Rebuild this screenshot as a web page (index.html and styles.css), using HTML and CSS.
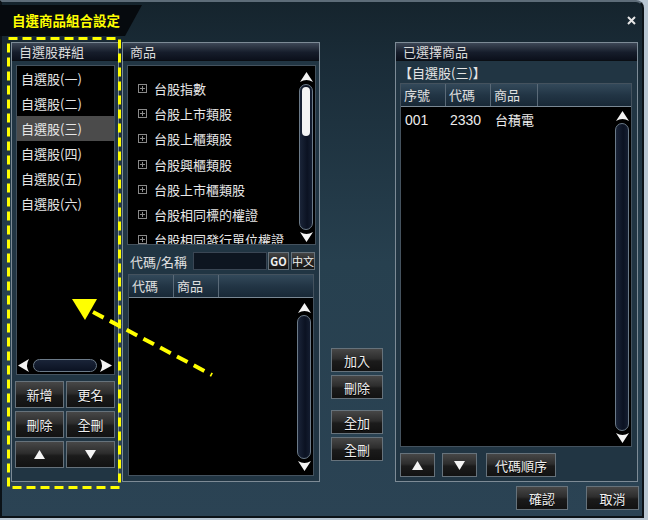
FILE: index.html
```html
<!DOCTYPE html>
<html lang="zh-Hant">
<head>
<meta charset="utf-8">
<title>自選商品組合設定</title>
<link rel="stylesheet" href="styles.css">
</head>
<body>
<div class="window">
  <div class="titlebar">
    <div class="title-tab">自選商品組合設定</div>
    <svg class="close" width="9" height="9" viewBox="0 0 9 9"><path d="M1 1 L8 8 M8 1 L1 8" stroke="#e6e6e6" stroke-width="2"/></svg>
  </div>

  <div class="main">
    <section class="panel groups">
      <div class="panel-head">自選股群組</div>
      <div class="group-list">
        <div class="group-items">
          <div class="item">自選股(一)</div>
          <div class="item">自選股(二)</div>
          <div class="item selected-item">自選股(三)</div>
          <div class="item">自選股(四)</div>
          <div class="item">自選股(五)</div>
          <div class="item">自選股(六)</div>
        </div>
        <div class="hscroll">
          <svg class="harrow" width="11" height="13" viewBox="0 0 11 13"><path d="M0 6.5 L11 0 Q7 6.5 11 13 Z" fill="#f4f4f4"/></svg>
          <div class="htrack"></div>
          <svg class="harrow right" width="12" height="13" viewBox="0 0 12 13"><path d="M12 6.5 L0 0 Q4 6.5 0 13 Z" fill="#f4f4f4"/></svg>
        </div>
      </div>
      <div class="group-buttons">
        <button class="btn">新增</button>
        <button class="btn">更名</button>
        <button class="btn">刪除</button>
        <button class="btn">全刪</button>
        <button class="btn"><svg width="11" height="9" viewBox="0 0 11 9"><path d="M5.5 0 L11 9 L0 9 Z" fill="#f4f4f4"/></svg></button>
        <button class="btn"><svg width="11" height="9" viewBox="0 0 11 9"><path d="M0 0 L11 0 L5.5 9 Z" fill="#f4f4f4"/></svg></button>
      </div>
    </section>

    <section class="panel products">
      <div class="panel-head">商品</div>
      <div class="tree-list">
        <div class="tree-items">
          <div class="tree-item"><svg class="plus" width="9" height="9" viewBox="0 0 9 9"><rect x="0.5" y="0.5" width="8" height="8" fill="none" stroke="#8a8a8a"/><path d="M4.5 2 V7 M2 4.5 H7" stroke="#8a8a8a"/></svg><span>台股指數</span></div>
          <div class="tree-item"><svg class="plus" width="9" height="9" viewBox="0 0 9 9"><rect x="0.5" y="0.5" width="8" height="8" fill="none" stroke="#8a8a8a"/><path d="M4.5 2 V7 M2 4.5 H7" stroke="#8a8a8a"/></svg><span>台股上市類股</span></div>
          <div class="tree-item"><svg class="plus" width="9" height="9" viewBox="0 0 9 9"><rect x="0.5" y="0.5" width="8" height="8" fill="none" stroke="#8a8a8a"/><path d="M4.5 2 V7 M2 4.5 H7" stroke="#8a8a8a"/></svg><span>台股上櫃類股</span></div>
          <div class="tree-item"><svg class="plus" width="9" height="9" viewBox="0 0 9 9"><rect x="0.5" y="0.5" width="8" height="8" fill="none" stroke="#8a8a8a"/><path d="M4.5 2 V7 M2 4.5 H7" stroke="#8a8a8a"/></svg><span>台股興櫃類股</span></div>
          <div class="tree-item"><svg class="plus" width="9" height="9" viewBox="0 0 9 9"><rect x="0.5" y="0.5" width="8" height="8" fill="none" stroke="#8a8a8a"/><path d="M4.5 2 V7 M2 4.5 H7" stroke="#8a8a8a"/></svg><span>台股上市櫃類股</span></div>
          <div class="tree-item"><svg class="plus" width="9" height="9" viewBox="0 0 9 9"><rect x="0.5" y="0.5" width="8" height="8" fill="none" stroke="#8a8a8a"/><path d="M4.5 2 V7 M2 4.5 H7" stroke="#8a8a8a"/></svg><span>台股相同標的權證</span></div>
          <div class="tree-item"><svg class="plus" width="9" height="9" viewBox="0 0 9 9"><rect x="0.5" y="0.5" width="8" height="8" fill="none" stroke="#8a8a8a"/><path d="M4.5 2 V7 M2 4.5 H7" stroke="#8a8a8a"/></svg><span>台股相同發行單位權證</span></div>
        </div>
        <div class="vscroll top-scroll">
          <svg class="varrow" width="13" height="10" viewBox="0 0 13 10"><path d="M6.5 0 L13 10 Q6.5 6 0 10 Z" fill="#f4f4f4"/></svg>
          <div class="track"><div class="thumb"></div></div>
          <svg class="varrow" width="13" height="10" viewBox="0 0 13 10"><path d="M6.5 10 L13 0 Q6.5 4 0 0 Z" fill="#f4f4f4"/></svg>
        </div>
      </div>
      <div class="search-row">
        <span class="search-label">代碼/名稱</span>
        <div class="search-input"></div>
        <button class="mini-btn go">GO</button>
        <button class="mini-btn zh">中文</button>
      </div>
      <div class="result-list">
        <div class="col-head">
          <div class="col w45">代碼</div>
          <div class="col w45">商品</div>
          <div class="col fill"></div>
        </div>
        <div class="list-body">
          <div class="rows"></div>
          <div class="vscroll low-scroll">
            <svg class="varrow" width="13" height="10" viewBox="0 0 13 10"><path d="M6.5 0 L13 10 Q6.5 6 0 10 Z" fill="#f4f4f4"/></svg>
            <div class="track"></div>
            <svg class="varrow" width="13" height="10" viewBox="0 0 13 10"><path d="M6.5 10 L13 0 Q6.5 4 0 0 Z" fill="#f4f4f4"/></svg>
          </div>
        </div>
      </div>
    </section>

    <div class="mid-buttons">
      <button class="btn mid">加入</button>
      <button class="btn mid">刪除</button>
      <button class="btn mid gap-top">全加</button>
      <button class="btn mid">全刪</button>
    </div>

    <section class="panel selected">
      <div class="panel-head">已選擇商品</div>
      <div class="subtitle">【自選股(三)】</div>
      <div class="sel-list">
        <div class="col-head">
          <div class="col w45">序號</div>
          <div class="col w45">代碼</div>
          <div class="col w47">商品</div>
          <div class="col fill"></div>
        </div>
        <div class="list-body">
          <div class="rows">
            <div class="row">
              <span class="cell w45 num">001</span>
              <span class="cell w45 num">2330</span>
              <span class="cell">台積電</span>
            </div>
          </div>
          <div class="vscroll sel-scroll">
            <svg class="varrow" width="13" height="10" viewBox="0 0 13 10"><path d="M6.5 0 L13 10 Q6.5 6 0 10 Z" fill="#f4f4f4"/></svg>
            <div class="track"></div>
            <svg class="varrow" width="13" height="10" viewBox="0 0 13 10"><path d="M6.5 10 L13 0 Q6.5 4 0 0 Z" fill="#f4f4f4"/></svg>
          </div>
        </div>
      </div>
      <div class="sel-buttons">
        <button class="btn sq"><svg width="11" height="9" viewBox="0 0 11 9"><path d="M5.5 0 L11 9 L0 9 Z" fill="#f4f4f4"/></svg></button>
        <button class="btn sq down"><svg width="11" height="9" viewBox="0 0 11 9"><path d="M0 0 L11 0 L5.5 9 Z" fill="#f4f4f4"/></svg></button>
        <button class="btn order">代碼順序</button>
      </div>
    </section>
  </div>

  <div class="footer">
    <button class="btn foot">確認</button>
    <button class="btn foot cancel">取消</button>
  </div>
</div>

<svg class="annot" width="648" height="520" viewBox="0 0 648 520">
  <rect x="8.5" y="38.5" width="111" height="449" fill="none" stroke="#ffff00" stroke-width="3" stroke-dasharray="9 5"/>
  <line x1="93" y1="312" x2="212" y2="375" stroke="#ffff00" stroke-width="4" stroke-dasharray="12 7"/>
  <polygon points="72,299 97,299 85,320" fill="#ffff00"/>
</svg>
</body>
</html>
```

FILE: styles.css
```css
* { box-sizing: border-box; }

body {
  margin: 0;
  position: relative;
  width: 648px;
  height: 520px;
  background: #b9c7d3;
  font-family: "Noto Sans CJK TC", "Noto Sans", sans-serif;
  color: #e4e4e4;
  overflow: hidden;
}

.window {
  width: 644px;
  height: 518px;
  border: 2px solid #0b1217;
  border-top-color: #5d6c78;
  border-radius: 0 8px 0 0;
  background: linear-gradient(#15242d 0px, #1a2c38 60px, #27404f 260px, #2b4354 518px);
  display: flex;
  flex-direction: column;
}

.titlebar {
  height: 40px;
  display: flex;
  justify-content: space-between;
  align-items: flex-start;
}

.title-tab {
  margin-top: 3px;
  margin-left: -2px;
  width: 142px;
  height: 31px;
  padding-left: 12px;
  background: #060a0e;
  clip-path: polygon(0 0, 100% 0, calc(100% - 17px) 100%, 0 100%);
  color: #ffff00;
  font-size: 13.5px;
  font-weight: bold;
  line-height: 31px;
}

.close {
  margin: 14px 6px 0 0;
}

.main {
  height: 440px;
  display: flex;
  padding-left: 9px;
}

.panel {
  border: 1px solid #7d8b96;
  background: #213543;
  display: flex;
  flex-direction: column;
}

.panel-head {
  height: 18px;
  line-height: 18px;
  padding-left: 7px;
  font-size: 13px;
  color: #dcdcdc;
  background: linear-gradient(#3d4756, #161d2b 55%, #0b101b);
  border-bottom: 1px solid #0a0e14;
  flex: none;
}

/* left group panel */
.groups { width: 108px; }

.group-list {
  margin: 4px 3px 0 4px;
  height: 310px;
  border: 1px solid #44525e;
  background: #000;
  display: flex;
  flex-direction: column;
}

.group-items { flex: 1; }

.item {
  height: 25px;
  line-height: 25px;
  padding-left: 4px;
  font-size: 13px;
  color: #e6e6e6;
}

.selected-item { background: #4b4b4b; }

.hscroll {
  height: 13px;
  margin-bottom: 2px;
  display: flex;
  align-items: center;
}

.harrow { margin-left: 1px; flex: none; }
.harrow.right { margin-left: 3px; }

.htrack {
  margin-left: 4px;
  width: 64px;
  height: 13px;
  border: 1px solid #6b7a88;
  border-radius: 7px;
  background: linear-gradient(#1a2438, #0b1222);
}

.group-buttons {
  margin: 6px 0 0 3px;
  width: 100px;
  display: grid;
  grid-template-columns: 49px 49px;
  grid-auto-rows: 27px;
  gap: 3px 2px;
}

/* buttons */
.btn {
  margin: 0;
  padding: 0;
  border: 1px solid #66727b;
  background: linear-gradient(#474747, #2d2d2d 45%, #1b1b1b 55%, #121212);
  color: #f0f0f0;
  font-family: "Noto Sans CJK TC", "Noto Sans", sans-serif;
  font-size: 13px;
  line-height: 1;
  display: flex;
  align-items: center;
  justify-content: center;
  text-shadow: 0 1px 0 #000;
}

/* middle products panel */
.products { width: 198px; margin-left: 3px; }

.tree-list {
  margin: 4px 3px 0 4px;
  height: 180px;
  border: 1px solid #44525e;
  background: #000;
  display: flex;
  overflow: hidden;
}

.tree-items {
  flex: 1;
  padding-top: 10px;
  overflow: hidden;
}

.tree-item {
  height: 25.2px;
  display: flex;
  align-items: center;
  white-space: nowrap;
  font-size: 13px;
  color: #e8e8e8;
}

.plus { margin-left: 10px; flex: none; }
.tree-item span { margin-left: 7px; }

.vscroll {
  width: 16px;
  flex: none;
  display: flex;
  flex-direction: column;
  align-items: center;
  margin-right: 1px;
}

.top-scroll { padding: 6px 0 2px; }
.low-scroll { padding: 5px 0 4px; }
.sel-scroll { padding: 4px 0 3px; }

.varrow { flex: none; }

.track {
  flex: 1;
  width: 14px;
  margin: 2px 0;
  border: 1px solid #6b7a88;
  border-radius: 7px;
  background: linear-gradient(90deg, #1a2438, #0b1222 60%, #141d30);
  padding-top: 2px;
}

.thumb {
  width: 8px;
  height: 49px;
  margin: 0 auto;
  border-radius: 4px;
  background: #f4f4f4;
}

.search-row {
  margin-top: 7px;
  height: 18px;
  display: flex;
  align-items: center;
  padding-left: 7px;
}

.search-label {
  font-size: 13px;
  color: #e0e0e0;
  width: 63px;
  white-space: nowrap;
}

.search-input {
  width: 74px;
  height: 18px;
  background: #0d1520;
  border: 1px solid #3a4654;
}

.mini-btn {
  height: 18px;
  margin: 0 0 0 1px;
  padding: 0;
  border: 1px solid #66727b;
  background: linear-gradient(#464646, #262626 50%, #141414);
  color: #f0f0f0;
  font-family: "Noto Sans CJK TC", "Noto Sans", sans-serif;
  font-size: 11px;
  font-weight: bold;
  line-height: 1;
}

.go { width: 21px; }
.zh { width: 24px; margin-left: 2px; font-weight: normal; }

.result-list {
  margin: 4px 5px 0 5px;
  height: 202px;
  border: 1px solid #44525e;
  background: #000;
  display: flex;
  flex-direction: column;
}

.col-head {
  height: 23px;
  flex: none;
  display: flex;
  background: linear-gradient(#33495a, #223545 50%, #182836);
  border-bottom: 1px solid #7a8894;
}

.col {
  height: 100%;
  border-right: 1px solid #5a6a78;
  font-size: 13px;
  line-height: 22px;
  padding-left: 3px;
  color: #e0e0e0;
}

.col.fill { flex: 1; border-right: none; }

.w45 { width: 45px; }
.w47 { width: 47px; }

.list-body {
  flex: 1;
  display: flex;
}

.rows { flex: 1; }

/* middle buttons */
.mid-buttons {
  width: 52px;
  margin-left: 11px;
  padding-top: 306px;
  display: flex;
  flex-direction: column;
  gap: 3px;
}

.btn.mid { height: 24px; }
.btn.gap-top { margin-top: 8px; }

/* right selected panel */
.selected { width: 243px; margin-left: 12px; }

.subtitle {
  height: 22px;
  line-height: 24px;
  padding-left: 3px;
  font-size: 13px;
  color: #e6e6e6;
}

.sel-list {
  margin: 0 5px 0 4px;
  height: 364px;
  border: 1px solid #44525e;
  background: #000;
  display: flex;
  flex-direction: column;
}

.row {
  height: 25px;
  display: flex;
  align-items: center;
  font-size: 13px;
  color: #ececec;
}

.cell { padding-left: 4px; white-space: nowrap; }
.num {
  font-family: "Liberation Sans", sans-serif;
  font-size: 14px;
}

.sel-buttons {
  margin: 6px 0 0 4px;
  display: flex;
}

.btn.sq { width: 35px; height: 24px; }
.btn.down { margin-left: 7px; }
.btn.order { width: 70px; height: 24px; margin-left: 9px; }

.footer {
  height: 34px;
  display: flex;
  justify-content: flex-end;
  padding: 4px 3px 0 0;
}

.btn.foot { width: 52px; height: 24px; }
.btn.cancel { width: 53px; margin-left: 18px; }

.annot {
  position: absolute;
  left: 0;
  top: 0;
  pointer-events: none;
}
```
